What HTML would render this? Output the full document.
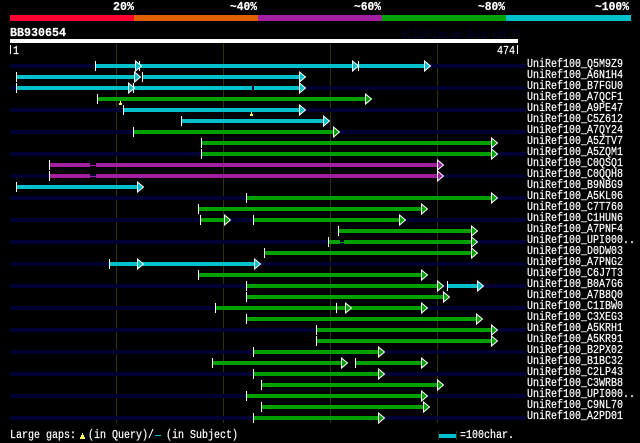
<!DOCTYPE html>
<html><head><meta charset="utf-8"><style>
html,body{margin:0;padding:0;background:#000;width:640px;height:443px;overflow:hidden}
svg{display:block}
text{font-family:"Liberation Mono",monospace;font-size:11.5px;fill:#fff;stroke:#fff;stroke-width:.2px}
text.b{font-weight:bold;font-size:12px}
text.f{fill:#000033;stroke:#000033}
g>text{transform:translateY(-1px)}
.n{fill:#000033}.g{fill:#00a000}.c{fill:#00c0cc}.p{fill:#a020a0}.w{fill:#fff}
rect{shape-rendering:crispEdges}
rect.n,rect.g,rect.c,rect.p{height:4px}
rect.h{height:1px;transform:translateY(1px)}
use.ar{stroke:#fff;stroke-width:1}
</style></head><body>
<svg width="640" height="443" viewBox="0 0 640 443" xmlns="http://www.w3.org/2000/svg">
<defs>
<polygon id="a" points="0.5,-5 6.5,0 0.5,5"/>
<rect id="t" y="61" width="1" height="10" fill="#fff"/>
<g id="m"><rect x="1" y="0" width="1" height="2" fill="#ffff66"/><rect x="0" y="2" width="3" height="2" fill="#ffff66"/></g>
</defs>
<rect width="640" height="443" fill="#000"/>
<text class="b" x="113" y="10" textLength="21" lengthAdjust="spacingAndGlyphs">20%</text>
<text class="b" x="230" y="10" textLength="27" lengthAdjust="spacingAndGlyphs">~40%</text>
<text class="b" x="354" y="10" textLength="27" lengthAdjust="spacingAndGlyphs">~60%</text>
<text class="b" x="478" y="10" textLength="27" lengthAdjust="spacingAndGlyphs">~80%</text>
<text class="b" x="595" y="10" textLength="34" lengthAdjust="spacingAndGlyphs">~100%</text>
<rect x="10" y="15" width="124" height="6" fill="#ff0033"/>
<rect x="134" y="15" width="124" height="6" fill="#e06000"/>
<rect x="258" y="15" width="124" height="6" fill="#a020a0"/>
<rect x="382" y="15" width="124" height="6" fill="#00a000"/>
<rect x="506" y="15" width="125" height="6" fill="#00c0cc"/>
<text class="b" x="10" y="36" textLength="56" lengthAdjust="spacingAndGlyphs">BB930654</text>
<text class="f" x="402" y="38" textLength="115" lengthAdjust="spacingAndGlyphs">AlignView.pm Beta rel.7</text>
<rect x="10" y="39" width="508" height="4" fill="#fff"/>
<rect x="10" y="45" width="1" height="9" fill="#fff"/>
<text x="13" y="54" textLength="6" lengthAdjust="spacingAndGlyphs">1</text>
<text x="497" y="54" textLength="18" lengthAdjust="spacingAndGlyphs">474</text>
<rect x="517" y="45" width="1" height="9" fill="#fff"/>
<rect x="116" y="44" width="1" height="379" fill="#333300"/>
<rect x="223" y="44" width="1" height="379" fill="#333300"/>
<rect x="330" y="44" width="1" height="379" fill="#333300"/>
<rect x="437" y="44" width="1" height="379" fill="#333300"/>

<g><rect class="n" x="10" y="64" width="516" height="3"/><rect class="c" x="96" y="64" width="328" height="3"/><use href="#t" x="95"/><use href="#t" x="139"/><use href="#t" x="358"/><use class="ar c" href="#a" x="135" y="66"/><use class="ar c" href="#a" x="352" y="66"/><use class="ar c" href="#a" x="424" y="66"/><text x="527" y="68" textLength="96" lengthAdjust="spacingAndGlyphs">UniRef100_Q5M9Z9</text></g>
<g transform="translate(0,11)"><rect class="c" x="17" y="64" width="118" height="3"/><rect class="c" x="143" y="64" width="156" height="3"/><use href="#t" x="16"/><use href="#t" x="142"/><use class="ar c" href="#a" x="134" y="66"/><use class="ar c" href="#a" x="299" y="66"/><text x="527" y="68" textLength="96" lengthAdjust="spacingAndGlyphs">UniRef100_A6N1H4</text></g>
<g transform="translate(0,22)"><rect class="n" x="10" y="64" width="516" height="3"/><rect class="c" x="17" y="64" width="235" height="3"/><rect class="c" x="254" y="64" width="46" height="3"/><use href="#t" x="16"/><use href="#t" x="133"/><use class="ar c" href="#a" x="128" y="66"/><use class="ar c" href="#a" x="299" y="66"/><text x="527" y="68" textLength="96" lengthAdjust="spacingAndGlyphs">UniRef100_B7FGU0</text></g>
<g transform="translate(0,33)"><rect class="g" x="98" y="64" width="268" height="3"/><use href="#t" x="97"/><use class="ar g" href="#a" x="365" y="66"/><text x="527" y="68" textLength="96" lengthAdjust="spacingAndGlyphs">UniRef100_A7QCF1</text></g>
<use href="#m" x="119" y="101"/>
<g transform="translate(0,44)"><rect class="n" x="10" y="64" width="516" height="3"/><rect class="c" x="124" y="64" width="176" height="3"/><use href="#t" x="123"/><use class="ar c" href="#a" x="299" y="66"/><text x="527" y="68" textLength="96" lengthAdjust="spacingAndGlyphs">UniRef100_A9PE47</text></g>
<use href="#m" x="250" y="112"/>
<g transform="translate(0,55)"><rect class="c" x="182" y="64" width="142" height="3"/><use href="#t" x="181"/><use class="ar c" href="#a" x="323" y="66"/><text x="527" y="68" textLength="96" lengthAdjust="spacingAndGlyphs">UniRef100_C5Z612</text></g>
<g transform="translate(0,66)"><rect class="n" x="10" y="64" width="516" height="3"/><rect class="g" x="134" y="64" width="200" height="3"/><use href="#t" x="133"/><use class="ar g" href="#a" x="333" y="66"/><text x="527" y="68" textLength="96" lengthAdjust="spacingAndGlyphs">UniRef100_A7QY24</text></g>
<g transform="translate(0,77)"><rect class="g" x="202" y="64" width="290" height="3"/><use href="#t" x="201"/><use class="ar g" href="#a" x="491" y="66"/><text x="527" y="68" textLength="96" lengthAdjust="spacingAndGlyphs">UniRef100_A5ZTV7</text></g>
<g transform="translate(0,88)"><rect class="n" x="10" y="64" width="516" height="3"/><rect class="g" x="202" y="64" width="290" height="3"/><use href="#t" x="201"/><use class="ar g" href="#a" x="491" y="66"/><text x="527" y="68" textLength="96" lengthAdjust="spacingAndGlyphs">UniRef100_A5ZQM1</text></g>
<g transform="translate(0,99)"><rect class="p" x="50" y="64" width="40" height="3"/><rect class="p h" x="90" y="65" width="6" height="1"/><rect class="p" x="96" y="64" width="342" height="3"/><use href="#t" x="49"/><use class="ar p" href="#a" x="437" y="66"/><text x="527" y="68" textLength="96" lengthAdjust="spacingAndGlyphs">UniRef100_C0QSQ1</text></g>
<g transform="translate(0,110)"><rect class="n" x="10" y="64" width="516" height="3"/><rect class="p" x="50" y="64" width="40" height="3"/><rect class="p h" x="90" y="65" width="6" height="1"/><rect class="p" x="96" y="64" width="342" height="3"/><use href="#t" x="49"/><use class="ar p" href="#a" x="437" y="66"/><text x="527" y="68" textLength="96" lengthAdjust="spacingAndGlyphs">UniRef100_C0QQH8</text></g>
<g transform="translate(0,121)"><rect class="c" x="17" y="64" width="121" height="3"/><use href="#t" x="16"/><use class="ar c" href="#a" x="137" y="66"/><text x="527" y="68" textLength="96" lengthAdjust="spacingAndGlyphs">UniRef100_B9NBG9</text></g>
<g transform="translate(0,132)"><rect class="n" x="10" y="64" width="516" height="3"/><rect class="g" x="247" y="64" width="245" height="3"/><use href="#t" x="246"/><use class="ar g" href="#a" x="491" y="66"/><text x="527" y="68" textLength="96" lengthAdjust="spacingAndGlyphs">UniRef100_A5KL06</text></g>
<g transform="translate(0,143)"><rect class="g" x="199" y="64" width="223" height="3"/><use href="#t" x="198"/><use class="ar g" href="#a" x="421" y="66"/><text x="527" y="68" textLength="96" lengthAdjust="spacingAndGlyphs">UniRef100_C7T760</text></g>
<g transform="translate(0,154)"><rect class="n" x="10" y="64" width="516" height="3"/><rect class="g" x="201" y="64" width="24" height="3"/><rect class="g" x="254" y="64" width="146" height="3"/><use href="#t" x="200"/><use href="#t" x="253"/><use class="ar g" href="#a" x="224" y="66"/><use class="ar g" href="#a" x="399" y="66"/><text x="527" y="68" textLength="96" lengthAdjust="spacingAndGlyphs">UniRef100_C1HUN6</text></g>
<g transform="translate(0,165)"><rect class="g" x="339" y="64" width="133" height="3"/><use href="#t" x="338"/><use class="ar g" href="#a" x="471" y="66"/><text x="527" y="68" textLength="96" lengthAdjust="spacingAndGlyphs">UniRef100_A7PNF4</text></g>
<g transform="translate(0,176)"><rect class="n" x="10" y="64" width="516" height="3"/><rect class="g" x="329" y="64" width="11" height="3"/><rect class="g h" x="340" y="65" width="4" height="1"/><rect class="g" x="344" y="64" width="128" height="3"/><use href="#t" x="328"/><use class="ar g" href="#a" x="471" y="66"/><text x="527" y="68" textLength="108" lengthAdjust="spacingAndGlyphs">UniRef100_UPI000..</text></g>
<g transform="translate(0,187)"><rect class="g" x="265" y="64" width="207" height="3"/><use href="#t" x="264"/><use class="ar g" href="#a" x="471" y="66"/><text x="527" y="68" textLength="96" lengthAdjust="spacingAndGlyphs">UniRef100_D0DW03</text></g>
<g transform="translate(0,198)"><rect class="n" x="10" y="64" width="516" height="3"/><rect class="c" x="110" y="64" width="145" height="3"/><use href="#t" x="109"/><use class="ar c" href="#a" x="137" y="66"/><use class="ar c" href="#a" x="254" y="66"/><text x="527" y="68" textLength="96" lengthAdjust="spacingAndGlyphs">UniRef100_A7PNG2</text></g>
<g transform="translate(0,209)"><rect class="g" x="199" y="64" width="223" height="3"/><use href="#t" x="198"/><use class="ar g" href="#a" x="421" y="66"/><text x="527" y="68" textLength="96" lengthAdjust="spacingAndGlyphs">UniRef100_C6J7T3</text></g>
<g transform="translate(0,220)"><rect class="n" x="10" y="64" width="516" height="3"/><rect class="g" x="247" y="64" width="191" height="3"/><rect class="c" x="448" y="64" width="30" height="3"/><use href="#t" x="246"/><use href="#t" x="447"/><use class="ar g" href="#a" x="437" y="66"/><use class="ar c" href="#a" x="477" y="66"/><text x="527" y="68" textLength="96" lengthAdjust="spacingAndGlyphs">UniRef100_B0A7G6</text></g>
<g transform="translate(0,231)"><rect class="g" x="247" y="64" width="197" height="3"/><use href="#t" x="246"/><use class="ar g" href="#a" x="443" y="66"/><text x="527" y="68" textLength="96" lengthAdjust="spacingAndGlyphs">UniRef100_A7B8Q0</text></g>
<g transform="translate(0,242)"><rect class="n" x="10" y="64" width="516" height="3"/><rect class="g" x="216" y="64" width="206" height="3"/><use href="#t" x="215"/><use href="#t" x="336"/><use class="ar g" href="#a" x="345" y="66"/><use class="ar g" href="#a" x="421" y="66"/><text x="527" y="68" textLength="96" lengthAdjust="spacingAndGlyphs">UniRef100_C1IBW0</text></g>
<g transform="translate(0,253)"><rect class="g" x="247" y="64" width="230" height="3"/><use href="#t" x="246"/><use class="ar g" href="#a" x="476" y="66"/><text x="527" y="68" textLength="96" lengthAdjust="spacingAndGlyphs">UniRef100_C3XEG3</text></g>
<g transform="translate(0,264)"><rect class="n" x="10" y="64" width="516" height="3"/><rect class="g" x="317" y="64" width="175" height="3"/><use href="#t" x="316"/><use class="ar g" href="#a" x="491" y="66"/><text x="527" y="68" textLength="96" lengthAdjust="spacingAndGlyphs">UniRef100_A5KRH1</text></g>
<g transform="translate(0,275)"><rect class="g" x="317" y="64" width="175" height="3"/><use href="#t" x="316"/><use class="ar g" href="#a" x="491" y="66"/><text x="527" y="68" textLength="96" lengthAdjust="spacingAndGlyphs">UniRef100_A5KR91</text></g>
<g transform="translate(0,286)"><rect class="n" x="10" y="64" width="516" height="3"/><rect class="g" x="254" y="64" width="125" height="3"/><use href="#t" x="253"/><use class="ar g" href="#a" x="378" y="66"/><text x="527" y="68" textLength="96" lengthAdjust="spacingAndGlyphs">UniRef100_B2PX02</text></g>
<g transform="translate(0,297)"><rect class="g" x="213" y="64" width="129" height="3"/><rect class="g" x="356" y="64" width="66" height="3"/><use href="#t" x="212"/><use href="#t" x="355"/><use class="ar g" href="#a" x="341" y="66"/><use class="ar g" href="#a" x="421" y="66"/><text x="527" y="68" textLength="96" lengthAdjust="spacingAndGlyphs">UniRef100_B1BC32</text></g>
<g transform="translate(0,308)"><rect class="n" x="10" y="64" width="516" height="3"/><rect class="g" x="254" y="64" width="125" height="3"/><use href="#t" x="253"/><use class="ar g" href="#a" x="378" y="66"/><text x="527" y="68" textLength="96" lengthAdjust="spacingAndGlyphs">UniRef100_C2LP43</text></g>
<g transform="translate(0,319)"><rect class="g" x="262" y="64" width="176" height="3"/><use href="#t" x="261"/><use class="ar g" href="#a" x="437" y="66"/><text x="527" y="68" textLength="96" lengthAdjust="spacingAndGlyphs">UniRef100_C3WRB8</text></g>
<g transform="translate(0,330)"><rect class="n" x="10" y="64" width="516" height="3"/><rect class="g" x="247" y="64" width="175" height="3"/><use href="#t" x="246"/><use class="ar g" href="#a" x="421" y="66"/><text x="527" y="68" textLength="108" lengthAdjust="spacingAndGlyphs">UniRef100_UPI000..</text></g>
<g transform="translate(0,341)"><rect class="g" x="262" y="64" width="162" height="3"/><use href="#t" x="261"/><use class="ar g" href="#a" x="423" y="66"/><text x="527" y="68" textLength="96" lengthAdjust="spacingAndGlyphs">UniRef100_C9NL70</text></g>
<g transform="translate(0,352)"><rect class="n" x="10" y="64" width="516" height="3"/><rect class="g" x="254" y="64" width="125" height="3"/><use href="#t" x="253"/><use class="ar g" href="#a" x="378" y="66"/><text x="527" y="68" textLength="96" lengthAdjust="spacingAndGlyphs">UniRef100_A2PD01</text></g>

<text x="10" y="438" textLength="66" lengthAdjust="spacingAndGlyphs">Large gaps:</text>
<rect x="82" y="433" width="1" height="2" fill="#ffff66"/><rect x="81" y="435" width="3" height="2" fill="#ffff66"/><rect x="80" y="437" width="5" height="2" fill="#ffff66"/>
<text x="88" y="438" textLength="66" lengthAdjust="spacingAndGlyphs">(in Query)/</text>
<rect x="155" y="435" width="6" height="1" fill="#00c0cc"/>
<text x="166" y="438" textLength="72" lengthAdjust="spacingAndGlyphs">(in Subject)</text>
<rect x="438" y="431" width="1" height="9" fill="#333300"/>
<rect x="456" y="431" width="1" height="9" fill="#333300"/>
<rect x="439" y="434" width="17" height="4" fill="#00c0cc"/>
<text x="460" y="438" textLength="54" lengthAdjust="spacingAndGlyphs">=100char.</text>
</svg>
</body></html>
